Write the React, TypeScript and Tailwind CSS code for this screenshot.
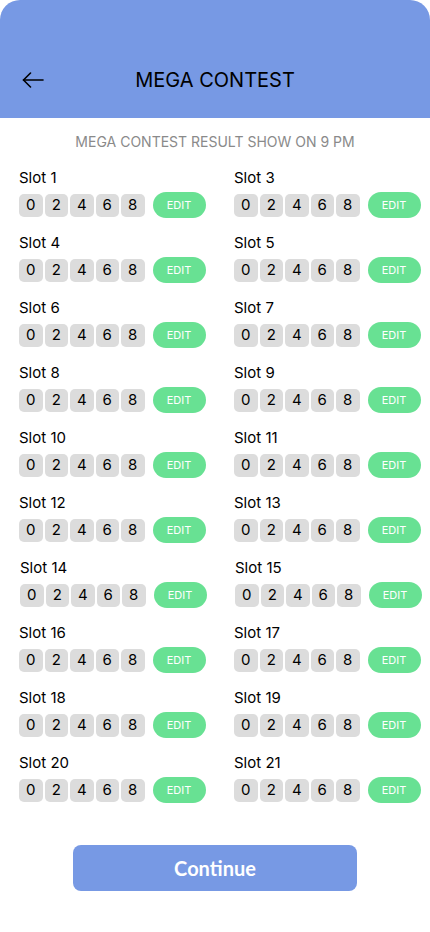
const slots = [
  [1, 3], [4, 5], [6, 7], [8, 9], [10, 11], [12, 13], [14, 15], [16, 17], [18, 19], [20, 21],
]
const digits = [0, 2, 4, 6, 8]

const BackArrow = () => (
  <svg width="22" height="16" viewBox="0 0 22 16" fill="none" stroke="#000" strokeWidth="1.6" strokeLinecap="round" strokeLinejoin="round">
    <path d="M21 8H1.5" />
    <path d="M8.5 1L1.5 8l7 7" />
  </svg>
)

const Slot = ({ n }: { n: number }) => (
  <div className="flex flex-col">
    <div className="text-[15px] leading-[20px] text-black">Slot {n}</div>
    <div className="mt-[4px] flex items-center">
      <div className="flex gap-[2px]">
        {digits.map((d) => (
          <div
            key={d}
            className="flex h-[23px] w-[23.5px] items-center justify-center rounded-[5px] bg-[#dcdcdc] text-[15px] text-black"
          >
            {d}
          </div>
        ))}
      </div>
      <button className="ml-[8px] flex h-[26px] w-[53px] items-center justify-center rounded-full bg-[#68e193] text-[11px] text-white">
        EDIT
      </button>
    </div>
  </div>
)

export default function App() {
  return (
    <div className="min-h-[932px] w-[430px] bg-white font-['Inter',sans-serif]">
      {/* Header */}
      <div className="relative flex h-[118px] items-start justify-center rounded-t-[20px] bg-[#7799e4] pt-[68px]">
        <div className="absolute left-[22px] top-[72px]">
          <BackArrow />
        </div>
        <h1 className="text-[20px] leading-[24px] text-black">MEGA CONTEST</h1>
      </div>

      <p className="mt-[14px] text-center text-[14px] leading-[20px] text-[#8a8a8a]">
        MEGA CONTEST RESULT SHOW ON 9 PM
      </p>

      {/* Slots */}
      <div className="mt-[16px] flex flex-col gap-[15px] pl-[19px]">
        {slots.map(([a, b], i) => (
          <div key={a} className={`grid grid-cols-[215px_1fr] ${i === 6 ? 'pl-px' : ''}`}>
            <Slot n={a} />
            <Slot n={b} />
          </div>
        ))}
      </div>

      <div className="mt-[42px] flex justify-center">
        <button className="h-[46px] w-[284px] rounded-[8px] bg-[#7799e4] font-['Lato',sans-serif] text-[20px] font-bold text-white">
          Continue
        </button>
      </div>
    </div>
  )
}
